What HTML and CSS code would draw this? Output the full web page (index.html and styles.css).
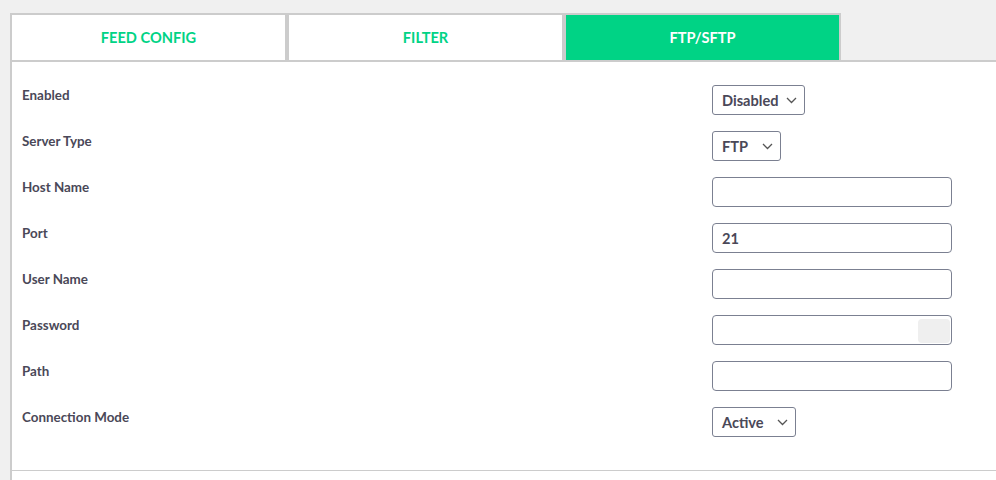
FILE: index.html
```html
<!DOCTYPE html>
<html lang="en">
<head>
<meta charset="utf-8"/>
<meta content="width=device-width, initial-scale=1.0" name="viewport"/>
<title>Feed FTP/SFTP</title>
<link rel="stylesheet" href="styles.css">
</head>
<body>
<div class="page">
<nav class="tabs">
<div class="tab">FEED CONFIG</div>
<div class="tab">FILTER</div>
<div class="tab active">FTP/SFTP</div>
</nav>
<div class="panel">
<form class="form">
<div class="row">
<label>Enabled</label>
<div class="select sel-enabled"><span>Disabled</span><svg width="11" height="7" viewBox="0 0 11 7"><path d="M1 1l4.5 4.5 4.5-4.5" fill="none" stroke="#555" stroke-width="1.3"/></svg></div>
</div>
<div class="row">
<label>Server Type</label>
<div class="select sel-type"><span>FTP</span><svg width="11" height="7" viewBox="0 0 11 7"><path d="M1 1l4.5 4.5 4.5-4.5" fill="none" stroke="#555" stroke-width="1.3"/></svg></div>
</div>
<div class="row">
<label>Host Name</label>
<div class="input"></div>
</div>
<div class="row">
<label>Port</label>
<div class="input">21</div>
</div>
<div class="row">
<label>User Name</label>
<div class="input"></div>
</div>
<div class="row">
<label>Password</label>
<div class="input password"><span class="key"></span></div>
</div>
<div class="row">
<label>Path</label>
<div class="input"></div>
</div>
<div class="row">
<label>Connection Mode</label>
<div class="select sel-mode"><span>Active</span><svg width="11" height="7" viewBox="0 0 11 7"><path d="M1 1l4.5 4.5 4.5-4.5" fill="none" stroke="#555" stroke-width="1.3"/></svg></div>
</div>
</form>
<div class="footer"></div>
</div>
</div>
</body>
</html>
```

FILE: styles.css
```css
body { margin: 0; background: #f0f0f0; font-family: Lato, "Noto Sans", sans-serif; color: #4a4858; }
.page { padding: 13px 0 0 10px; }
.tabs { display: flex; }
.tab {
  width: 273px;
  height: 45px;
  border: 2px solid #cccccc;
  border-bottom: none;
  background: #fff;
  color: #00d385;
  font-size: 14.6px;
  font-weight: 700;
  display: flex;
  align-items: center;
  justify-content: center;
}
.tab.active { background: #00d385; color: #fff; }
.panel { background: #fff; border-top: 2px solid #cccccc; border-left: 2px solid #cccccc; }
.form { padding: 23px 0 17px 10px; border-bottom: 1px solid #cccccc; }
.row { display: flex; align-items: flex-start; height: 46px; }
.row label { width: 690px; padding-top: 2px; line-height: 16px; font-size: 13.4px; font-weight: 700; }
.select, .input {
  box-sizing: border-box;
  height: 30px;
  border: 1px solid #7b8091;
  border-radius: 3px;
  font-size: 14.6px;
  font-weight: 700;
  display: flex;
  align-items: center;
  padding: 0 7px 0 9px;
}
.select { justify-content: space-between; }
.sel-enabled { width: 93px; }
.sel-type { width: 69px; }
.sel-mode { width: 84px; }
.input { width: 240px; border-radius: 4px; position: relative; }
.key { position: absolute; right: 1px; top: 3px; width: 32px; height: 24px; background: #efefef; border-radius: 4px; }
.footer { height: 9px; }
```
